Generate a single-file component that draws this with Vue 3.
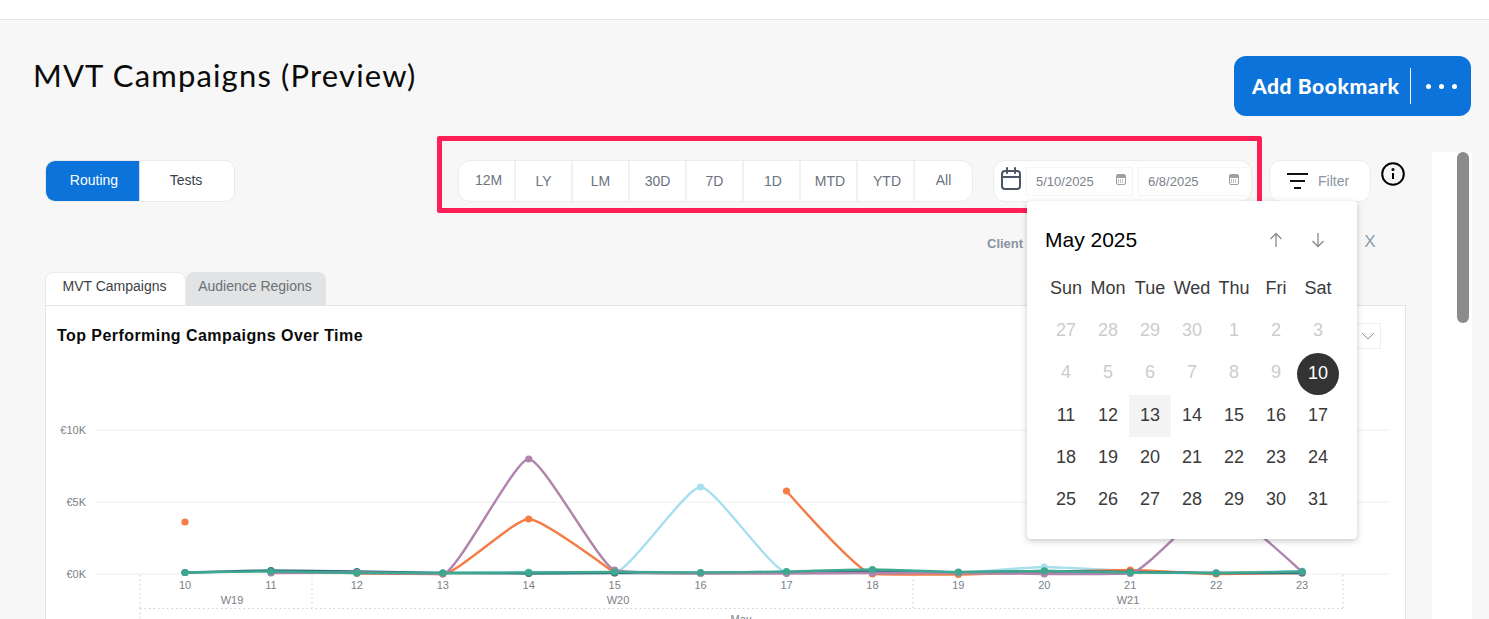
<script setup>
const presets = ['12M', 'LY', 'LM', '30D', '7D', '1D', 'MTD', 'YTD', 'All']
const weekdays = ['Sun', 'Mon', 'Tue', 'Wed', 'Thu', 'Fri', 'Sat']
const weeks = [
  [27, 28, 29, 30, 1, 2, 3],
  [4, 5, 6, 7, 8, 9, 10],
  [11, 12, 13, 14, 15, 16, 17],
  [18, 19, 20, 21, 22, 23, 24],
  [25, 26, 27, 28, 29, 30, 31]
]

// chart box starts at page x=46, y=306
const ox = 46
const oy = 306
const xAt = (day) => 185 + (day - 10) * 85.93 - ox
const yTicks = [
  { label: '€10K', y: 430 - oy },
  { label: '€5K', y: 502 - oy },
  { label: '€0K', y: 574 - oy }
]
const days = [10, 11, 12, 13, 14, 15, 16, 17, 18, 19, 20, 21, 22, 23]
const weekLabels = [
  { label: 'W19', x: 232 - ox },
  { label: 'W20', x: 618 - ox },
  { label: 'W21', x: 1128 - ox }
]
const weekLines = [140, 312, 913, 1343].map((x) => x - ox)

function seg(startDay, ys) {
  return ys.map((y, i) => ({ x: xAt(startDay + i), y: y - oy }))
}

// highcharts style spline, tighter handles
const SMOOTH = 5
function spline(pts) {
  if (pts.length < 2) return ''
  const ctrl = pts.map((p, i) => {
    const a = pts[i - 1]
    const b = pts[i + 1]
    if (!a || !b) return { lx: p.x, ly: p.y, rx: p.x, ry: p.y }
    const lx = (SMOOTH * p.x + a.x) / (SMOOTH + 1)
    let ly = (SMOOTH * p.y + a.y) / (SMOOTH + 1)
    const rx = (SMOOTH * p.x + b.x) / (SMOOTH + 1)
    let ry = (SMOOTH * p.y + b.y) / (SMOOTH + 1)
    const c = ((ry - ly) * (rx - p.x)) / (rx - lx) + p.y - ry
    ly += c
    ry += c
    if (ly > a.y && ly > p.y) {
      ly = Math.max(a.y, p.y)
      ry = 2 * p.y - ly
    } else if (ly < a.y && ly < p.y) {
      ly = Math.min(a.y, p.y)
      ry = 2 * p.y - ly
    }
    if (ry > b.y && ry > p.y) {
      ry = Math.max(b.y, p.y)
      ly = 2 * p.y - ry
    } else if (ry < b.y && ry < p.y) {
      ry = Math.min(b.y, p.y)
      ly = 2 * p.y - ry
    }
    return { lx, ly, rx, ry }
  })
  let d = `M${pts[0].x} ${pts[0].y}`
  for (let i = 1; i < pts.length; i++) {
    d += ` C${ctrl[i - 1].rx} ${ctrl[i - 1].ry} ${ctrl[i].lx} ${ctrl[i].ly} ${pts[i].x} ${pts[i].y}`
  }
  return d
}

const series = [
  {
    color: '#a6dfee',
    segs: [seg(10, [572.5, 571, 573, 573, 572, 572.5, 487, 572, 570, 572.5, 567, 571, 573, 571])]
  },
  {
    color: '#f47c45',
    segs: [seg(10, [522]), seg(12, [573.5, 574, 519, 573]), seg(17, [491, 574, 574.5, 572, 570, 574, 573])]
  },
  {
    color: '#2f6f80',
    segs: [seg(10, [572.5, 570.5, 571.5, 573, 573.5, 573, 573, 572.5, 571, 572.5, 571, 572, 573, 573])]
  },
  {
    color: '#b084ad',
    segs: [seg(11, [573, 572.5, 574, 459, 570, 573.5, 573.5, 573, 573, 574, 573.5, 505, 572])]
  },
  {
    color: '#3fa690',
    segs: [seg(10, [572.5, 571.5, 573, 573, 572.5, 572, 572.5, 571.5, 569.5, 572, 571, 572.5, 573, 571.5])]
  }
]
</script>

<template>
  <div class="page">
    <div class="topbar"></div>

    <header class="head">
      <h1>MVT Campaigns (Preview)</h1>
      <div class="bookmark">
        <span class="bookmark-text">Add Bookmark</span>
        <span class="bookmark-sep"></span>
        <span class="dots"><i></i><i></i><i></i></span>
      </div>
    </header>

    <div class="body">
      <div class="content">
        <div class="toolbar">
          <div class="toggle">
            <span class="toggle-on">Routing</span>
            <span class="toggle-off">Tests</span>
          </div>

          <div class="presets">
            <span
              v-for="(p, i) in presets"
              :key="p"
              class="preset"
              :class="{ edge: i === 0 || i === presets.length - 1, late: i > 4 && i < 8 }"
            >{{ p }}</span>
          </div>

          <div class="dates">
            <svg class="cal-icon" width="22" height="24" viewBox="0 0 22 24" fill="none" stroke="#4b5563" stroke-width="2">
              <rect x="2" y="4" width="18" height="18" rx="3" />
              <path d="M2 10h18M7 1v5M15 1v5" stroke-linecap="round" />
            </svg>
            <div class="date-input">
              <span>5/10/2025</span>
              <svg width="10" height="11" viewBox="0 0 10 11">
                <rect x=".5" y=".5" width="9" height="10" rx="1.5" fill="#fff" stroke="#9aa0a6" />
                <path d="M.5 2.500h9" stroke="#9aa0a6" stroke-width="3" />
                <path d="M2 6h6M2 8h6" stroke="#7d838c" stroke-dasharray="1 1" />
              </svg>
            </div>
            <div class="date-input second">
              <span>6/8/2025</span>
              <svg width="10" height="11" viewBox="0 0 10 11">
                <rect x=".5" y=".5" width="9" height="10" rx="1.5" fill="#fff" stroke="#9aa0a6" />
                <path d="M.5 2.500h9" stroke="#9aa0a6" stroke-width="3" />
                <path d="M2 6h6M2 8h6" stroke="#7d838c" stroke-dasharray="1 1" />
              </svg>
            </div>

            <div class="popup">
              <div class="popup-head">
                <span class="month">May 2025</span>
                <span class="arrows">
                  <svg width="14" height="16" viewBox="0 0 14 16" fill="none" stroke="#8a8a8a" stroke-width="1.3">
                    <path d="M7 15V1.500M1.500 7 7 1.500 12.500 7" />
                  </svg>
                  <svg width="14" height="16" viewBox="0 0 14 16" fill="none" stroke="#8a8a8a" stroke-width="1.3">
                    <path d="M7 1v13.500M1.500 9 7 14.500 12.500 9" />
                  </svg>
                </span>
              </div>
              <div class="grid">
                <span v-for="w in weekdays" :key="w" class="wd">{{ w }}</span>
                <template v-for="(week, r) in weeks" :key="r">
                  <span
                    v-for="d in week"
                    :key="d"
                    class="day"
                    :class="{
                      muted: r === 0 || (r === 1 && d !== 10),
                      selected: r === 1 && d === 10,
                      today: r === 2 && d === 13
                    }"
                  >{{ d }}</span>
                </template>
              </div>
            </div>
          </div>

          <div class="filter">
            <svg width="22" height="16" viewBox="0 0 22 16" fill="none" stroke="#111" stroke-width="2">
              <path d="M0 1h21M3 8h15M7 15h7" />
            </svg>
            <span>Filter</span>
          </div>

          <svg class="info" width="24" height="24" viewBox="0 0 24 24" fill="none" stroke="#000" stroke-width="2">
            <circle cx="12" cy="12" r="10.800" />
            <path d="M12 11v6" />
            <circle cx="12" cy="7.500" r=".6" fill="#000" />
          </svg>

          <div class="highlight"></div>
        </div>

        <div class="client-row">
          <span class="client">Client</span>
          <span class="clear">X</span>
        </div>

        <div class="tabs">
          <span class="tab active">MVT Campaigns</span>
          <span class="tab">Audience Regions</span>
        </div>

        <section class="card">
          <div class="card-head">
            <h2>Top Performing Campaigns Over Time</h2>
            <div class="select">
              <svg width="16" height="8" viewBox="0 0 16 8" fill="none" stroke="#7c93a8" stroke-width="1">
                <path d="M2 1l6 6 6-6" />
              </svg>
            </div>
          </div>

          <svg class="chart" width="1359" height="330" viewBox="0 0 1359 330">
            <line v-for="t in yTicks" :key="t.label" x1="50" :x2="1343" :y1="t.y" :y2="t.y" stroke="#eeeeee" />
            <text v-for="t in yTicks" :key="t.label" x="40" :y="t.y + 4" text-anchor="end" class="tick">{{ t.label }}</text>

            <line
              v-for="x in weekLines"
              :key="x"
              :x1="x"
              :x2="x"
              y1="269"
              y2="302"
              stroke="#cfcfcf"
              stroke-dasharray="1.500 3"
            />
            <line x1="94" x2="1297" y1="302.500" y2="302.500" stroke="#cfcfcf" stroke-dasharray="1.500 3" />
            <line x1="94" x2="94" y1="302" y2="330" stroke="#cfcfcf" stroke-dasharray="1.500 3" />

            <text v-for="d in days" :key="d" :x="xAt(d)" y="283" text-anchor="middle" class="tick">{{ d }}</text>
            <text v-for="w in weekLabels" :key="w.label" :x="w.x" y="298" text-anchor="middle" class="tick">{{ w.label }}</text>
            <text x="695" y="317" text-anchor="middle" class="tick">May</text>

            <g v-for="(s, i) in series" :key="i">
              <path
                v-for="(pts, j) in s.segs"
                :key="j"
                :d="spline(pts)"
                fill="none"
                :stroke="s.color"
                stroke-width="2.400"
              />
              <template v-for="(pts, j) in s.segs" :key="j">
                <circle v-for="p in pts" :key="p.x" :cx="p.x" :cy="p.y" r="3.600" :fill="s.color" />
              </template>
            </g>
          </svg>
        </section>
      </div>

      <div class="track"><div class="thumb"></div></div>
    </div>
  </div>
</template>

<style scoped>
.page {
  height: 619px;
  overflow: hidden;
  background: #f7f7f7;
  font-family: "Liberation Sans", Arial, sans-serif;
}
.topbar {
  height: 19px;
  background: #fff;
  border-bottom: 1px solid #e4e4e4;
}
.head {
  display: flex;
  justify-content: space-between;
  align-items: flex-start;
  height: 132px;
  padding: 36px 18px 0 33px;
  box-sizing: border-box;
}
h1 {
  margin: -1px 0 0;
  font-family: Lato, sans-serif;
  font-weight: 400;
  font-size: 31px;
  line-height: 40px;
  color: #0b0b0b;
  letter-spacing: 1.17px;
}
.bookmark {
  display: flex;
  align-items: center;
  width: 237px;
  height: 60px;
  box-sizing: border-box;
  padding-left: 18px;
  background: #0b73d9;
  border-radius: 12px;
  color: #fff;
}
.bookmark-text {
  width: 149px;
  margin-top: -2px;
  font-family: Lato, sans-serif;
  font-weight: 900;
  font-size: 21px;
  letter-spacing: 0.55px;
  white-space: nowrap;
}
.bookmark-sep {
  width: 1px;
  height: 36px;
  margin-left: 9px;
  background: #fff;
}
.dots {
  display: flex;
  gap: 8px;
  margin-left: 15px;
}
.dots i {
  width: 5px;
  height: 5px;
  border-radius: 50%;
  background: #fff;
}
.body {
  display: flex;
  padding-left: 45px;
}
.content {
  width: 1361px;
  flex: none;
  padding-top: 8px;
}
.toolbar {
  position: relative;
  display: flex;
  align-items: flex-start;
  height: 42px;
}
.toggle {
  display: flex;
  width: 190px;
  height: 42px;
  box-sizing: border-box;
  background: #fff;
  border: 1px solid #eaeaea;
  border-radius: 10px;
  overflow: hidden;
  font-size: 14px;
}
.toggle-on {
  width: 95px;
  box-sizing: border-box;
  margin: -1px 0 -1px -1px;
  padding: 0 0 2px 4px;
  background: #0b73d9;
  color: #fff;
  display: flex;
  align-items: center;
  justify-content: center;
  border-right: 1px solid #cfe0f2;
}
.toggle-off {
  flex: 1;
  padding: 0 2px 2px 0;
  color: #374151;
  display: flex;
  align-items: center;
  justify-content: center;
}
.presets {
  display: flex;
  width: 515px;
  height: 42px;
  box-sizing: border-box;
  margin-left: 223px;
  background: #fff;
  border: 1px solid #ececec;
  border-radius: 12px;
  overflow: hidden;
}
.preset {
  flex: none;
  width: 57px;
  box-sizing: border-box;
  display: flex;
  align-items: center;
  justify-content: center;
  border-right: 2px solid #f1f1f1;
  font-size: 14px;
  color: #6b7280;
}
.preset:first-child {
  padding-left: 4px;
}
.preset.late {
  padding-left: 3px;
}
.preset:last-child {
  border-right: 0;
}
.preset.edge {
  padding-bottom: 2px;
}
.dates {
  position: relative;
  display: flex;
  align-items: center;
  width: 259px;
  height: 42px;
  box-sizing: border-box;
  margin-left: 20px;
  padding-left: 6px;
  background: #fff;
  border: 1px solid #ececec;
  border-radius: 12px;
}
.cal-icon {
  flex: none;
  margin-top: -4px;
}
.date-input {
  display: flex;
  align-items: center;
  justify-content: space-between;
  width: 107px;
  height: 29px;
  box-sizing: border-box;
  margin-left: 4px;
  padding: 0 6px 0 9px;
  border: 1px solid #f5f5f5;
  font-size: 13px;
  color: #7d838c;
}
.date-input.second {
  margin-left: 5px;
  width: 109px;
  padding-right: 8px;
  border-right: 0;
}
.date-input svg {
  margin-top: -4px;
}
.popup {
  position: absolute;
  top: 40px;
  left: 33px;
  z-index: 5;
  width: 330px;
  height: 338px;
  box-sizing: border-box;
  padding: 0 18px;
  background: #fff;
  border-radius: 4px;
  box-shadow: 0 2px 6px rgba(0, 0, 0, 0.22);
}
.popup-head {
  display: flex;
  align-items: center;
  justify-content: space-between;
  height: 68px;
  box-sizing: border-box;
  padding-top: 10px;
}
.month {
  font-size: 21px;
  color: #000;
}
.arrows {
  display: flex;
  gap: 28px;
  margin-right: 14px;
}
.grid {
  display: grid;
  grid-template-columns: repeat(7, 42px);
  grid-auto-rows: 42px;
}
.wd,
.day {
  display: flex;
  align-items: center;
  justify-content: center;
  box-sizing: border-box;
  font-size: 18px;
  color: #3a3a3a;
}
.wd {
  padding-bottom: 4px;
}
.day {
  padding-bottom: 1px;
}
.day.muted {
  color: #ccc;
  padding-bottom: 4px;
}
.day.selected {
  padding-bottom: 2px;
  background: #333;
  color: #fff;
  border-radius: 50%;
}
.day.today {
  background: #f4f4f4;
}
.filter {
  display: flex;
  align-items: center;
  width: 102px;
  height: 42px;
  box-sizing: border-box;
  margin-left: 17px;
  padding-left: 17px;
  gap: 9px;
  background: #fff;
  border: 1px solid #ececec;
  border-radius: 12px;
  font-size: 14px;
  color: #8a94a3;
}
.info {
  margin: 2px 0 0 10px;
}
.highlight {
  position: absolute;
  left: 392px;
  top: -24px;
  width: 825px;
  height: 77px;
  box-sizing: border-box;
  border: 5px solid #ff1f57;
  border-radius: 2px;
  pointer-events: none;
}
.client-row {
  display: flex;
  align-items: center;
  height: 70px;
  box-sizing: border-box;
  padding: 11px 0 0 942px;
}
.client {
  font-size: 13px;
  font-weight: 700;
  color: #8a93a0;
  margin-top: 2px;
}
.clear {
  margin-left: 341px;
  font-size: 17px;
  color: #8a9bb0;
  margin-top: -2px;
}
.tabs {
  display: flex;
  height: 33px;
  font-size: 14px;
}
.tab {
  width: 140px;
  box-sizing: border-box;
  padding: 6px 2px 0 0;
  text-align: center;
  background: #e2e3e5;
  color: #6b7075;
  border-radius: 8px 8px 0 0;
}
.tab.active {
  width: 141px;
  background: #fff;
  color: #3d3f45;
  border: 1px solid #eaeaea;
  border-bottom: 0;
  padding-top: 5px;
}
.card {
  background: #fff;
  border: 1px solid #e4e4e4;
  height: 400px;
  box-sizing: border-box;
}
.card-head {
  display: flex;
  justify-content: space-between;
  align-items: flex-start;
  height: 0;
  padding: 0 24px 0 11px;
}
h2 {
  margin: 20px 0 0;
  font-size: 16px;
  line-height: 20px;
  font-weight: 700;
  letter-spacing: 0.44px;
  color: #0b0b0b;
}
.select {
  display: flex;
  align-items: center;
  justify-content: flex-end;
  width: 60px;
  height: 26px;
  margin-top: 17px;
  box-sizing: border-box;
  padding-right: 4px;
  border: 1px solid #efefef;
}
.chart {
  display: block;
}
.tick {
  font-family: "Liberation Sans", Arial, sans-serif;
  font-size: 11px;
  fill: #7b8088;
}
.track {
  width: 40px;
  height: 467px;
  margin-left: 26px;
  background: #fff;
  flex: none;
}
.thumb {
  width: 12px;
  height: 171px;
  margin-left: 25px;
  background: #8b8b8b;
  border-radius: 6px;
}
</style>
